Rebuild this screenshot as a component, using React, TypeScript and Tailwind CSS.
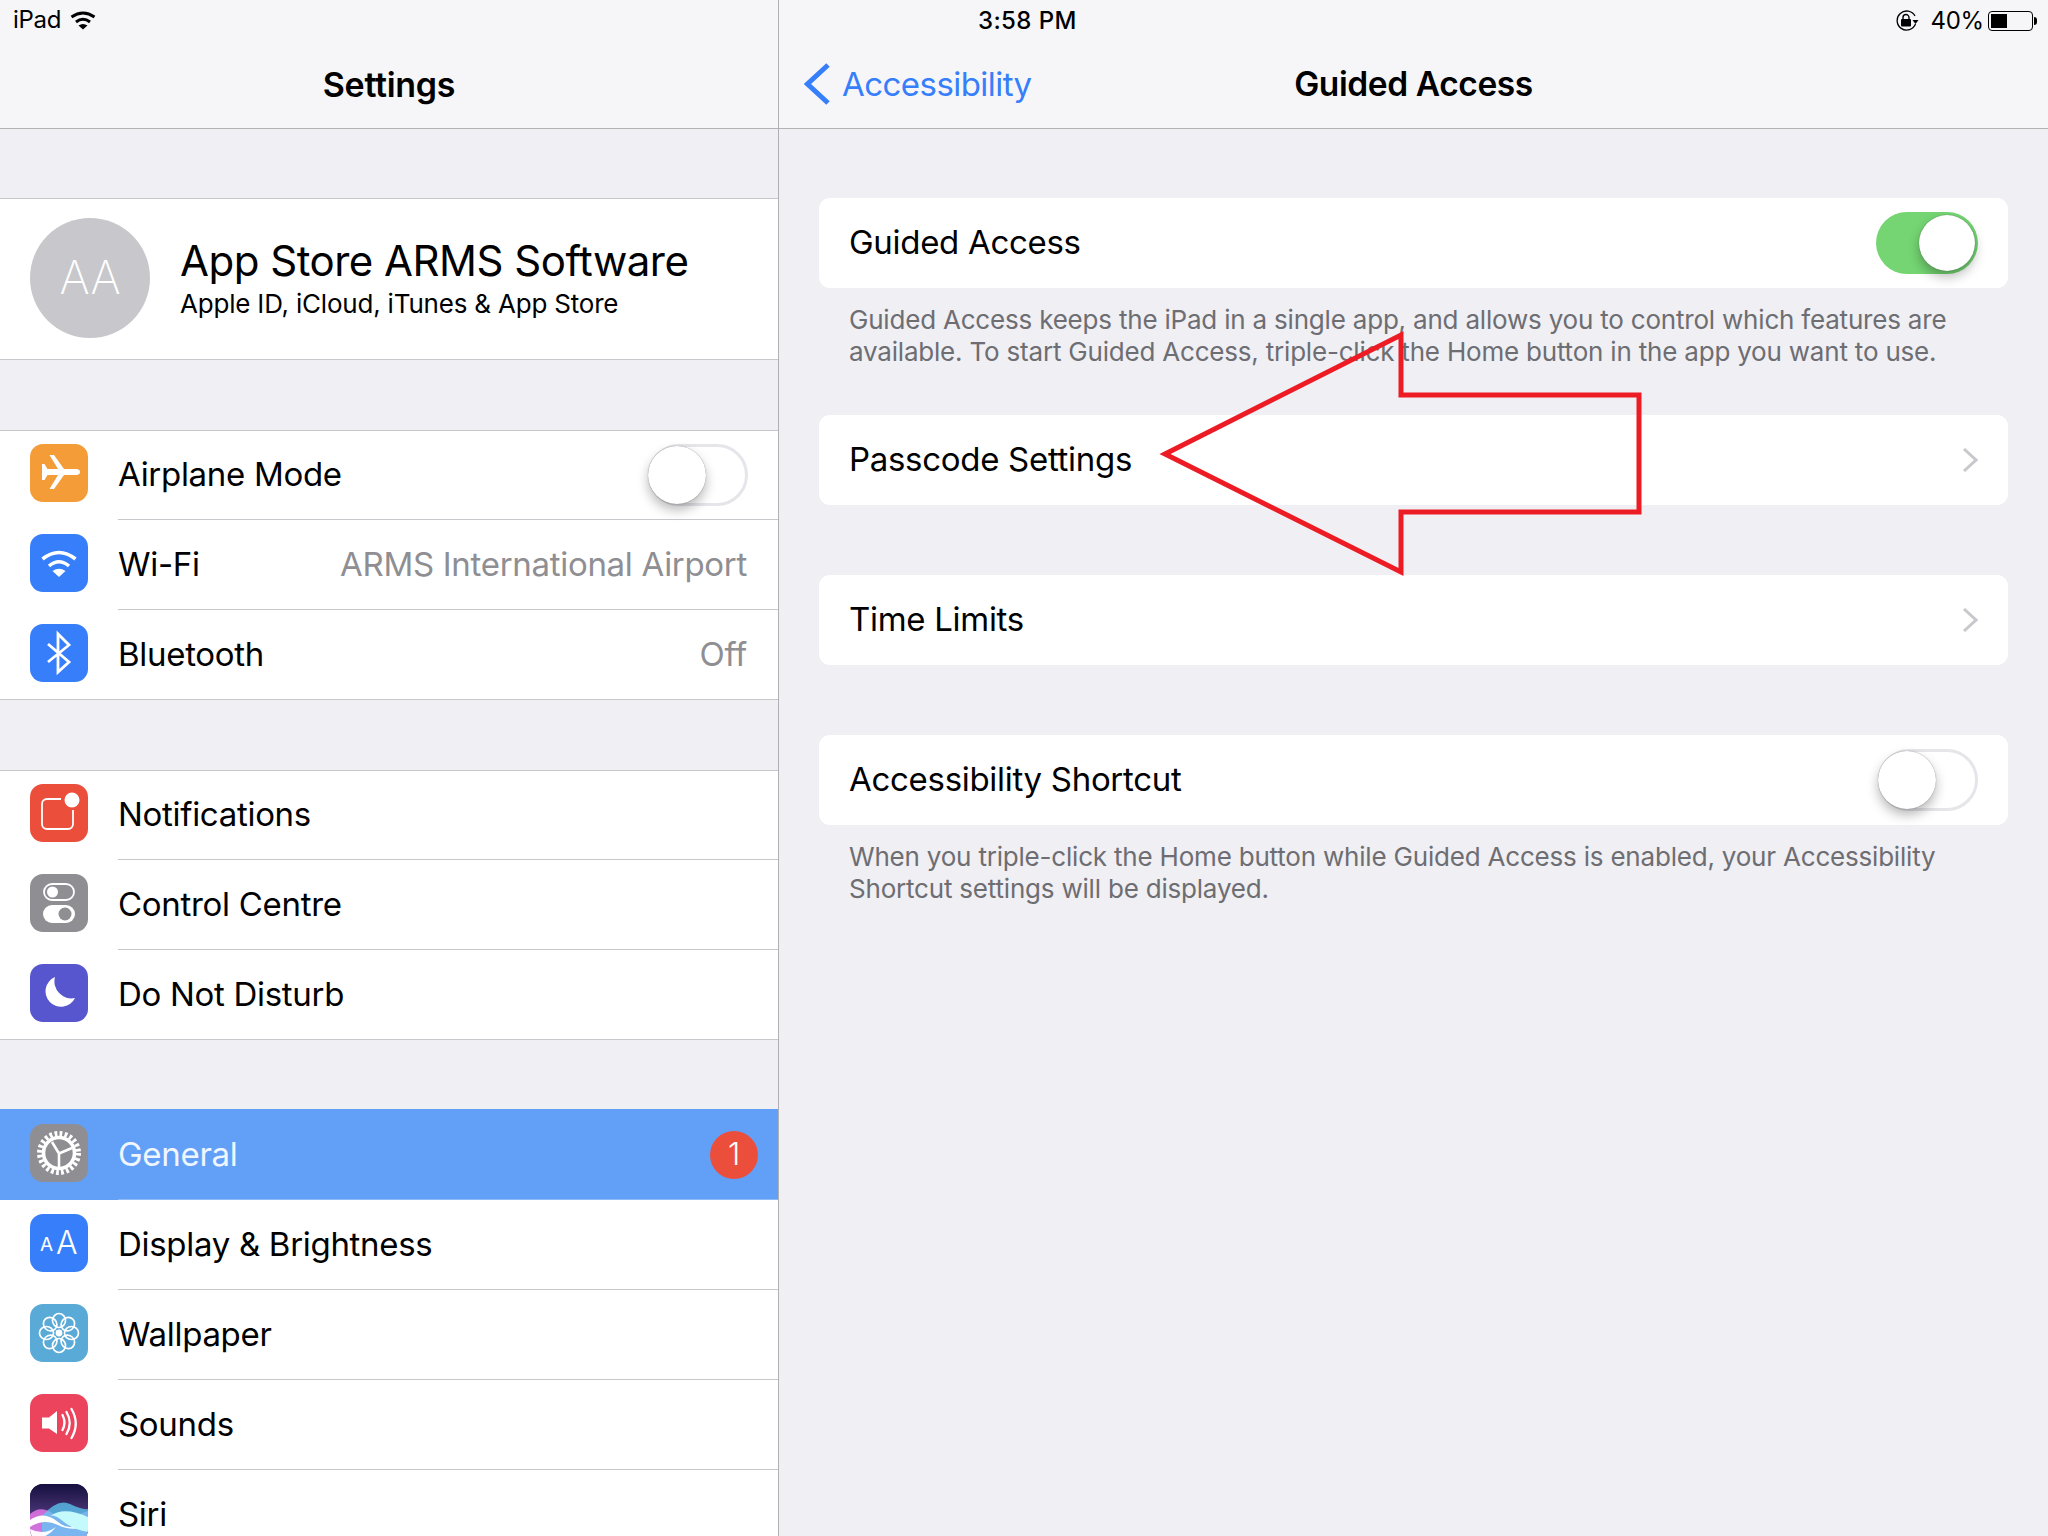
import React from "react";

const Box = ({ bg, children }: { bg: string; children: React.ReactNode }) => (
  <div className={`w-[58px] h-[58px] rounded-[13px] overflow-hidden shrink-0 ${bg}`}>
    <svg width="58" height="58" viewBox="0 0 58 58">{children}</svg>
  </div>
);

const Airplane = () => (
  <Box bg="bg-[#f39c38]">
    <path d="M12 20 L14.5 20 L17.5 25 L28 25 L19.5 11 L24 11 L34 25 L46 25 Q50 25 50 28 Q50 31 46 31 L34 31 L24 45 L19.5 45 L28 31 L17.5 31 L14.5 36 L12 36 Z" fill="#fff" />
  </Box>
);
const Wifi = () => (
  <Box bg="bg-[#377efa]">
    <g fill="none" stroke="#fff" strokeWidth="3.6">
      <path d="M12.5 25 Q29 12 45.5 25" />
      <path d="M19 32 Q29 23.5 39 32" />
    </g>
    <path d="M29 43 L22.5 37 Q29 32.5 35.5 37 Z" fill="#fff" />
  </Box>
);
const Bluetooth = () => (
  <Box bg="bg-[#377efa]">
    <path d="M18 20 L39 38 L28 48 V10 L39 21 L18 38" fill="none" stroke="#fff" strokeWidth="2.8" />
  </Box>
);
const Notif = () => (
  <Box bg="bg-[#ec4e3c]">
    <path d="M31 15 H17 a5 5 0 0 0 -5 5 V40 a5 5 0 0 0 5 5 H38 a5 5 0 0 0 5 -5 V26" fill="none" stroke="#fff" strokeWidth="1.8" />
    <circle cx="42" cy="16" r="7.5" fill="#fff" />
  </Box>
);
const Control = () => (
  <Box bg="bg-[#8e8e93]">
    <rect x="14" y="10" width="30" height="16" rx="8" fill="none" stroke="#fff" strokeWidth="1.8" />
    <circle cx="22.5" cy="18" r="5.5" fill="#fff" />
    <rect x="13" y="31" width="32" height="18" rx="9" fill="#fff" />
    <circle cx="35" cy="40" r="6.5" fill="#8e8e93" />
  </Box>
);
const Moon = () => (
  <Box bg="bg-[#5856cf]">
    <path d="M25 13 A15.5 15.5 0 1 0 45 34 A17 17 0 0 1 25 13 Z" fill="#fff" />
  </Box>
);
const Gear = () => (
  <Box bg="bg-[#8e8e93]">
    <g fill="none" stroke="#fff">
      <circle cx="29" cy="29" r="19.5" strokeWidth="5" strokeDasharray="2.8 2.305" />
      <circle cx="29" cy="29" r="15.5" strokeWidth="3.6" />
      <path d="M29 29.5 L22 18 M29 29.5 L42 24 M29 29.5 L29 43" strokeWidth="2.6" />
    </g>
  </Box>
);
const AaIcon = () => (
  <Box bg="bg-[#377efa]">
    <text x="10" y="37" fontSize="19" fill="#fff" fontFamily="Inter, sans-serif">A</text>
    <text x="26" y="40" fontSize="32" fontWeight="300" fill="#fff" fontFamily="Inter, sans-serif">A</text>
  </Box>
);
const Flower = () => (
  <Box bg="bg-[#5aaad8]">
    <g fill="none" stroke="#fff" strokeWidth="1.7">
      {[0, 45, 90, 135, 180, 225, 270, 315].map((r) => (
        <ellipse key={r} cx="29" cy="16.5" rx="6.5" ry="7" transform={`rotate(${r} 29 29)`} />
      ))}
    </g>
    <circle cx="29" cy="29" r="3.4" fill="#fff" />
  </Box>
);
const Sound = () => (
  <Box bg="bg-[#ed445e]">
    <path d="M12 23.5 H19 L27 17 V40 L19 34.5 H12 Z" fill="#fff" />
    <g fill="none" stroke="#fff" strokeWidth="2.3" strokeLinecap="round">
      <path d="M32.5 21 Q36.5 28.5 32.5 36" />
      <path d="M36.5 18 Q43 29 36.5 40" />
      <path d="M41.5 15 Q50 29.5 41.5 44" />
    </g>
  </Box>
);
const Siri = () => (
  <Box bg="bg-[#1d1446]">
    <defs>
      <linearGradient id="sb" x1="0" y1="0" x2="0" y2="1">
        <stop offset="0" stopColor="#150f3e" />
        <stop offset="0.45" stopColor="#43306f" />
        <stop offset="1" stopColor="#5a6aa0" />
      </linearGradient>
    </defs>
    <rect width="58" height="58" fill="url(#sb)" />
    <path d="M0 30 Q10 21 22 29 T58 27 V58 H0 Z" fill="#f07cf0" opacity="0.8" />
    <path d="M12 32 Q28 14 40 20 T58 25 V58 H12 Z" fill="#5ccbf4" opacity="0.75" />
    <path d="M0 36 Q14 26 28 38 T58 35 V42 Q42 48 28 41 T0 43 Z" fill="#fff" />
    <path d="M20 32 Q34 22 58 33 V48 Q44 46 34 38 T20 32 Z" fill="#c4fafc" />
    <path d="M0 45 Q14 52 26 43 Q14 58 0 52 Z" fill="#fff" opacity="0.95" />
  </Box>
);

const Row = ({ icon, label, last, value, top = 14, h = 90, sel, right }: { icon: React.ReactNode; label: string; last?: boolean; value?: string; top?: number; h?: number; sel?: boolean; right?: React.ReactNode }) => (
  <div className={`flex ${sel ? "bg-[#62a0f8]" : ""} ${h === 91 ? "h-[91px]" : h === 89 ? "h-[89px]" : "h-[90px]"}`}>
    <div className={`w-[118px] shrink-0 pl-[30px] ${top === 15 ? "pt-[15px]" : top === 14 ? "pt-[14px]" : "pt-[13px]"}`}>{icon}</div>
    <div className={`flex-1 min-w-0 flex items-center justify-between pr-[31px] ${last ? "" : sel ? "border-b border-[#8fbaf8]" : "border-b border-[#c8c7cc]"} ${sel ? "pt-[1px]" : ""}`}>
      <span className={`text-[33px] tracking-[-0.3px] ${sel ? "text-[#f0f6ff]" : "text-black"}`}>{label}</span>
      {value && <span className="text-[33px] tracking-[-0.3px] text-[#8e8e93]">{value}</span>}
      {right}
    </div>
  </div>
);

const Switch = ({ on }: { on?: boolean }) =>
  on ? (
    <div className="relative w-[102px] h-[62px] rounded-full bg-[#74d572] shrink-0">
      <div className="absolute right-[3px] top-[3px] w-[56px] h-[56px] rounded-full bg-white shadow-[0_0_1px_rgba(0,0,0,0.5),0_6px_12px_rgba(0,0,0,0.28)]" />
    </div>
  ) : (
    <div className="relative w-[100px] h-[62px] rounded-full border-[3px] border-[#e5e5ea] bg-white shrink-0">
      <div className="absolute left-[-3px] top-[-1px] w-[58px] h-[58px] rounded-full bg-white shadow-[0_0_1px_rgba(0,0,0,0.5),0_6px_12px_rgba(0,0,0,0.28)]" />
    </div>
  );

const Chevron = () => (
  <svg width="16" height="26" viewBox="0 0 16 26" className="shrink-0">
    <path d="M2 2 L14 13 L2 24" fill="none" stroke="#c7c7cc" strokeWidth="3" />
  </svg>
);

const Card = ({ label, right }: { label: string; right: React.ReactNode }) => (
  <div className="h-[90px] rounded-[11px] bg-white mx-[40px] pl-[30px] pr-[30px] flex items-center justify-between">
    <span className="text-[33px] tracking-[-0.3px] text-black">{label}</span>
    {right}
  </div>
);

const Foot = ({ children }: { children: React.ReactNode }) => (
  <p className="mx-[40px] pl-[30px] pr-[30px] pt-[16px] text-[26px] leading-[32px] tracking-[-0.2px] text-[#6d6d72]">{children}</p>
);

export default function App() {
  return (
    <div className="relative w-[2048px] h-[1536px] overflow-hidden flex bg-[#efeff4] font-['Inter',sans-serif]">
      <aside className="w-[779px] shrink-0 border-r border-[#b0b0b4] flex flex-col">
        <header className="h-[129px] shrink-0 bg-[#f6f6f8] border-b border-[#b2b2b2]">
          <div className="h-[40px] flex items-center pl-[13px] gap-[9px]">
            <span className="text-[24px] leading-none tracking-[-0.3px] text-black">iPad</span>
            <svg width="26" height="20" viewBox="0 0 26 20">
              <g fill="none" stroke="#000" strokeWidth="3">
                <path d="M1.5 7 Q13 -1 24.5 7" />
                <path d="M6 12 Q13 6.5 20 12" />
              </g>
              <path d="M13 19.5 L8.5 15.5 Q13 12.5 17.5 15.5 Z" />
            </svg>
          </div>
          <div className="h-[88px] flex items-center justify-center">
            <span className="text-[34px] font-semibold tracking-[-0.3px] text-black">Settings</span>
          </div>
        </header>
        <div className="h-[69px] shrink-0" />
        <div className="h-[162px] shrink-0 bg-white border-y border-[#c8c7cc] flex items-center pl-[30px] pb-[3px]">
          <div className="w-[120px] h-[120px] rounded-full bg-[#c7c7cc] flex items-center justify-center text-[46px] font-extralight text-white">AA</div>
          <div className="ml-[30px] flex flex-col">
            <span className="text-[42px] leading-[53px] tracking-[-0.5px] text-black">App Store ARMS Software</span>
            <span className="text-[26px] leading-[34px] tracking-[-0.2px] text-black">Apple ID, iCloud, iTunes &amp; App Store</span>
          </div>
        </div>
        <div className="h-[70px] shrink-0" />
        <div className="shrink-0 bg-white border-y border-[#c8c7cc]">
          <Row icon={<Airplane />} label="Airplane Mode" top={13} h={89} right={<div className="mr-[-1px]"><Switch /></div>} />
          <Row icon={<Wifi />} label="Wi-Fi" value="ARMS International Airport" />
          <Row icon={<Bluetooth />} label="Bluetooth" value="Off" last h={89} />
        </div>
        <div className="h-[70px] shrink-0" />
        <div className="shrink-0 bg-white border-y border-[#c8c7cc]">
          <Row icon={<Notif />} label="Notifications" top={13} h={89} />
          <Row icon={<Control />} label="Control Centre" />
          <Row icon={<Moon />} label="Do Not Disturb" last h={89} />
        </div>
        <div className="h-[69px] shrink-0" />
        <div className="flex-1 bg-white">
          <Row
            icon={<Gear />}
            label="General"
            sel
            top={15}
            h={91}
            right={<span className="w-[48px] h-[48px] rounded-full bg-[#ec4e3c] mr-[-11px] flex items-center justify-center text-[31px] font-light text-white">1</span>}
          />
          <Row icon={<AaIcon />} label="Display & Brightness" />
          <Row icon={<Flower />} label="Wallpaper" />
          <Row icon={<Sound />} label="Sounds" />
          <Row icon={<Siri />} label="Siri" last />
        </div>
      </aside>
      <main className="flex-1 min-w-0 flex flex-col">
        <header className="h-[129px] shrink-0 bg-[#f6f6f8] border-b border-[#b2b2b2]">
          <div className="h-[40px] pt-[2px] flex items-center justify-between pl-[199px] pr-[11px]">
            <span className="text-[24px] font-medium tracking-[0.4px] text-black">3:58 PM</span>
            <div className="flex items-center">
              <svg width="24" height="22" viewBox="0 0 24 22">
                <path d="M20 6 A9.5 9.5 0 1 0 20.5 14" fill="none" stroke="#000" strokeWidth="1.3" />
                <path d="M17.5 10 L23.5 10 L20.5 14 Z" />
                <rect x="6" y="9" width="10" height="7.5" rx="1" />
                <path d="M8 9 V7.5 a3 3 0 0 1 6 0 V9" fill="none" stroke="#000" strokeWidth="1.4" />
              </svg>
              <span className="ml-[11px] text-[24px] tracking-[-0.2px] text-black">40%</span>
              <div className="ml-[4px] w-[45px] h-[20px] rounded-[4px] border border-black p-[2px]">
                <div className="w-[16px] h-full bg-black" />
              </div>
              <div className="ml-[1px] w-[3px] h-[8px] rounded-r-full bg-black" />
            </div>
          </div>
          <div className="relative h-[88px] flex items-center justify-center">
            <span className="text-[33.5px] font-semibold tracking-[-0.4px] text-black">Guided Access</span>
            <div className="absolute left-[25px] top-[3px] flex items-center h-[82px]">
              <svg width="26" height="42" viewBox="0 0 26 42">
                <path d="M24 2 L3.5 21 L24 40" fill="none" stroke="#377efa" strokeWidth="5" />
              </svg>
              <span className="ml-[12px] pt-[2px] text-[33px] tracking-[-0.55px] text-[#377efa]">Accessibility</span>
            </div>
          </div>
        </header>
        <div className="h-[69px] shrink-0" />
        <Card label="Guided Access" right={<Switch on />} />
        <Foot>
          Guided Access keeps the iPad in a single app, and allows you to control which features are
          <br />
          available. To start Guided Access, triple-click the Home button in the app you want to use.
        </Foot>
        <div className="h-[47px] shrink-0" />
        <Card label="Passcode Settings" right={<Chevron />} />
        <div className="h-[70px] shrink-0" />
        <Card label="Time Limits" right={<Chevron />} />
        <div className="h-[70px] shrink-0" />
        <Card label="Accessibility Shortcut" right={<Switch />} />
        <Foot>
          When you triple-click the Home button while Guided Access is enabled, your Accessibility
          <br />
          Shortcut settings will be displayed.
        </Foot>
      </main>
      <svg className="absolute left-0 top-0 pointer-events-none" width="2048" height="1536">
        <path d="M1165 454 L1401 335 V395 H1639 V512 H1401 V572 Z" fill="none" stroke="#ed1c24" strokeWidth="5" />
      </svg>
    </div>
  );
}
